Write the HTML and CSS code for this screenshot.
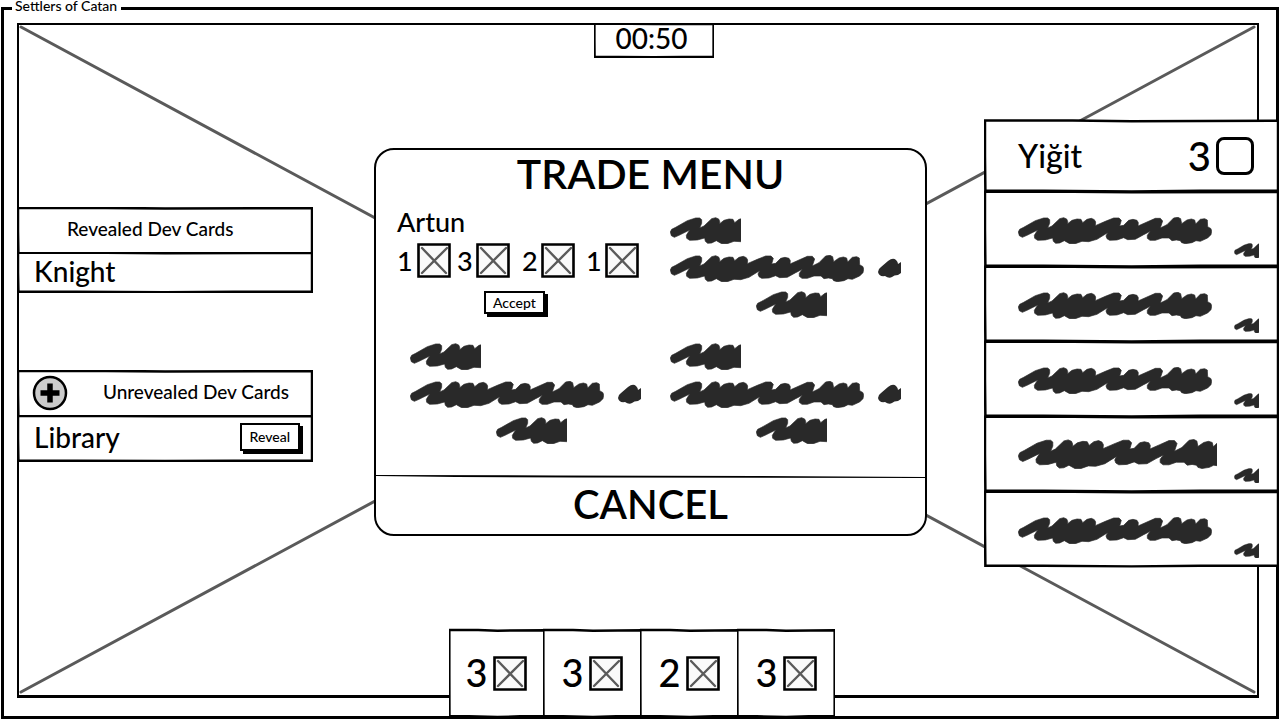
FILE: index.html
```html
<!DOCTYPE html>
<html lang="en">
<head>
<meta charset="utf-8">
<title>Settlers of Catan</title>
<link rel="stylesheet" href="styles.css">
</head>
<body>
<svg class="defs" aria-hidden="true">
  <symbol id="frame" viewBox="0 0 300 48" preserveAspectRatio="none">
    <path class="ink" d="M1 1 L90 1 L150 1.400 L299 1.200 L299 24 L299 46.600 L220 46.600 L150 47 L60 46.600 L1.400 46.600 L1 24Z"/>
  </symbol>
  <symbol id="crate" viewBox="0 0 34 35">
    <path d="M1.5 1.5 L32.5 1.5 L32.5 33.5 L1.5 33.5Z" fill="#fafafa" stroke="#000" stroke-width="2.6"/>
    <path d="M5 5 L29 30 M30 5 L5 30" fill="none" stroke="#5a5a5a" stroke-width="2.4" stroke-linecap="round"/>
  </symbol>
  <g id="squiggle" transform="scale(.3333) translate(-23 -35)">
    <path class="mass" d="M24 80 L28 72 L40 66 L75 46 L100 38 L112 38 L118 43 L118 54 L112 68 L125 62 L148 40 L160 37 L169 41 L172 48 L172 55 L185 45 L200 41 L212 42 L217 52 L230 42 L243 39 L252 43 L256 50 L255 61 L285 48 L310 38 L326 38 L333 45 L328 62 L340 60 L355 45 L368 42 L380 45 L384 52 L383 62 L410 50 L435 39 L450 39 L457 47 L450 68 L470 58 L490 38 L503 36 L511 40 L514 55 L530 44 L543 41 L553 44 L556 56 L570 42 L583 40 L591 44 L592 64 L602 70 L604 78 L602 88 L592 98 L570 108 L557 106 L545 112 L525 115 L514 112 L510 106 L498 104 L485 106 L476 98 L455 98 L435 105 L419 105 L411 99 L411 90 L420 78 L400 88 L375 102 L352 103 L340 97 L320 104 L298 105 L290 100 L287 92 L292 82 L260 102 L235 109 L215 108 L195 115 L178 115 L162 106 L148 113 L136 114 L129 108 L127 98 L105 104 L82 105 L73 99 L72 90 L82 74 L50 90 L36 96 L27 91Z"/>
  </g>
  <symbol id="long" viewBox="0 0 194 27"><use href="#squiggle"/></symbol>
  <symbol id="wide" viewBox="0 0 181 27"><use href="#squiggle"/></symbol>
  <symbol id="short" viewBox="0 0 71 27"><use href="#squiggle"/></symbol>
  <symbol id="tiny" viewBox="0 0 43 26"><use href="#squiggle"/></symbol>
  <symbol id="blob" viewBox="0 0 23 21">
    <path class="blot" d="M0 14 Q0 11 3 9 L10 3 Q15 -1 18 2 Q20 4 20 6 L23 4 V15 L20 17 Q16 17 14 19 Q11 21 7 18 Q1 19 0 14Z"/>
  </symbol>
</svg>

<fieldset class="window">
  <legend>Settlers of Catan</legend>
  <main class="stage">
    <svg class="board" viewBox="0 0 1236 669" preserveAspectRatio="none" aria-hidden="true">
      <path class="diagonal" d="M2 2 L1233 666 M1233 2 L2 666"/>
    </svg>

    <aside class="cards">
      <section>
        <div class="panel head"><svg class="frame"><use href="#frame"/></svg><h2>Revealed Dev Cards</h2></div>
        <div class="panel card low"><svg class="frame"><use href="#frame"/></svg><span>Knight</span></div>
      </section>
      <section>
        <div class="panel head spread"><svg class="frame"><use href="#frame"/></svg>
          <button class="add" type="button" aria-label="Add card">
            <svg viewBox="0 0 36 36"><circle cx="18" cy="18" r="16" fill="#ccc" stroke="#000" stroke-width="2.5"/><path d="M18 8.500V27.500M8.500 18H27.500" stroke="#000" stroke-width="5.500"/></svg>
          </button>
          <h2>Unrevealed Dev Cards</h2></div>
        <div class="panel card"><svg class="frame"><use href="#frame"/></svg><span>Library</span><button class="btn" type="button">Reveal</button></div>
      </section>
    </aside>

    <div class="center">
      <div class="panel timer"><svg class="frame"><use href="#frame"/></svg><time>00:50</time></div>

      <section class="trade">
        <h1>TRADE MENU</h1>
        <div class="offers">
          <article class="offer">
            <h3>Artun</h3>
            <ul class="goods">
              <li><b>1</b><svg class="crate"><use href="#crate"/></svg></li>
              <li><b>3</b><svg class="crate"><use href="#crate"/></svg></li>
              <li><b>2</b><svg class="crate"><use href="#crate"/></svg></li>
              <li><b>1</b><svg class="crate"><use href="#crate"/></svg></li>
            </ul>
            <button class="btn accept" type="button">Accept</button>
          </article>
          <article class="offer ghost">
            <svg class="short"><use href="#short"/></svg>
            <div class="line"><svg class="long"><use href="#long"/></svg><svg class="blob"><use href="#blob"/></svg></div>
            <svg class="short inset"><use href="#short"/></svg>
          </article>
          <article class="offer ghost">
            <svg class="short"><use href="#short"/></svg>
            <div class="line"><svg class="long"><use href="#long"/></svg><svg class="blob"><use href="#blob"/></svg></div>
            <svg class="short inset"><use href="#short"/></svg>
          </article>
          <article class="offer ghost">
            <svg class="short"><use href="#short"/></svg>
            <div class="line"><svg class="long"><use href="#long"/></svg><svg class="blob"><use href="#blob"/></svg></div>
            <svg class="short inset"><use href="#short"/></svg>
          </article>
        </div>
        <svg class="rule" viewBox="0 0 550 4" preserveAspectRatio="none"><path d="M0 0 L180 .5 L380 1 L550 2 L550 3 L200 2.500 L80 2 L0 1Z"/></svg>
        <button class="cancel" type="button">CANCEL</button>
      </section>

      <ul class="hand">
        <li class="panel"><svg class="frame"><use href="#frame"/></svg><b>3</b><svg class="crate"><use href="#crate"/></svg></li>
        <li class="panel"><svg class="frame"><use href="#frame"/></svg><b>3</b><svg class="crate"><use href="#crate"/></svg></li>
        <li class="panel"><svg class="frame"><use href="#frame"/></svg><b>2</b><svg class="crate"><use href="#crate"/></svg></li>
        <li class="panel"><svg class="frame"><use href="#frame"/></svg><b>3</b><svg class="crate"><use href="#crate"/></svg></li>
      </ul>
    </div>

    <ul class="players">
      <li class="panel active"><svg class="frame"><use href="#frame"/></svg><span>Yiğit</span><b>3</b><i class="tile"></i></li>
      <li class="panel"><svg class="frame"><use href="#frame"/></svg><svg class="long"><use href="#long"/></svg><svg class="tiny"><use href="#tiny"/></svg></li>
      <li class="panel"><svg class="frame"><use href="#frame"/></svg><svg class="long"><use href="#long"/></svg><svg class="tiny"><use href="#tiny"/></svg></li>
      <li class="panel"><svg class="frame"><use href="#frame"/></svg><svg class="long"><use href="#long"/></svg><svg class="tiny"><use href="#tiny"/></svg></li>
      <li class="panel"><svg class="frame"><use href="#frame"/></svg><svg class="wide"><use href="#wide"/></svg><svg class="tiny"><use href="#tiny"/></svg></li>
      <li class="panel"><svg class="frame"><use href="#frame"/></svg><svg class="long"><use href="#long"/></svg><svg class="tiny"><use href="#tiny"/></svg></li>
    </ul>
  </main>
</fieldset>
</body>
</html>
```
FILE: styles.css
```css
* { box-sizing: border-box; }
body {
  margin: 0;
  min-height: 100vh;
  display: flex;
  background: #fff;
  color: #000;
  font-family: Lato, "Open Sans", sans-serif;
  font-weight: 500;
}
h1, h2, h3, ul { margin: 0; padding: 0; font-weight: inherit; }
ul { list-style: none; }
b { font-weight: inherit; }
svg { display: block; flex: none; }
button { font: inherit; color: inherit; padding: 0; border: 0; background: none; }
.defs { position: absolute; width: 0; height: 0; }

.ink { fill: #fff; stroke: #000; stroke-width: 2.5px; vector-effect: non-scaling-stroke; }
.mass { fill: #292929; stroke: #292929; stroke-width: 2px; stroke-linejoin: round; }
.blot { fill: #292929; }

.window {
  flex: 1;
  min-width: 0;
  margin: 0 1px 1px;
  padding: 0;
  border: 3px solid #000;
}
legend {
  margin-left: 8px;
  padding: 0 4px 4px 3px;
  font-size: 14px;
  line-height: 12px;
}
.stage {
  position: relative;
  min-height: calc(100vh - 20px);
  padding-left: 13px;
  display: grid;
  grid-template-columns: 357fr 553fr 349fr;
}
.board {
  position: absolute;
  top: 7px;
  left: 13px;
  width: calc(100% - 30px);
  height: calc(100% - 25px);
  border: 3px solid #000;
  border-width: 2px 2px 3px;
}
.diagonal { fill: none; stroke: #5a5a5a; stroke-width: 3px; stroke-linecap: round; vector-effect: non-scaling-stroke; }

.panel { position: relative; display: flex; align-items: center; }
.panel > * { position: relative; }
.panel > .frame { position: absolute; inset: 0; width: 100%; height: 100%; overflow: visible; }

.cards { padding: 191px 61px 0 0; display: flex; flex-direction: column; gap: 77px; }
.head { height: 48px; padding: 0 24px 4px 50px; }
.head h2 { font-size: 19px; line-height: 24px; }
.spread { padding: 0 24px 4px 15px; justify-content: space-between; }
.add { width: 36px; height: 36px; margin-top: 2px; }
.card { height: 47px; margin-top: -3px; padding: 0 13px 4px 17px; justify-content: space-between; font-size: 28px; line-height: 32px; }
.low { height: 41px; }
.btn {
  height: 28px;
  padding: 0 8px;
  border: 2px solid #000;
  background: #fff;
  box-shadow: 3px 3px 0 #000;
  font-size: 14px;
  line-height: 20px;
}

.center { position: relative; display: flex; flex-direction: column; align-items: center; padding-top: 7px; }
.timer { width: 120px; height: 35px; margin-left: 6px; justify-content: center; padding: 0 4px 6px 0; font-size: 28px; line-height: 30px; }

.trade {
  width: 100%;
  margin-top: 90px;
  border: 2px solid #000;
  border-radius: 20px;
  background: #fff;
}
.trade h1 { text-align: center; font-size: 41px; font-weight: 600; line-height: 48px; }
.offers {
  padding: 10px 0 0 21px;
  display: grid;
  grid-template-columns: 260px 260px;
  grid-auto-rows: 126px;
}
.offer h3 { font-size: 27px; line-height: 28px; }
.goods { display: grid; grid-template-columns: 60px 65px 64px 53px; margin-top: 7px; font-size: 27px; line-height: 35px; }
.goods li { display: flex; align-items: center; justify-content: space-between; }
.goods li:first-child { padding-right: 6px; }
.goods li:nth-child(2) { padding-right: 12px; }
.goods li:nth-child(3) { padding-right: 11px; }
.goods .crate { width: 34px; height: 35px; }
.accept { display: block; height: 23px; padding: 0 7px; margin: 13px 0 0 87px; line-height: 19px; }
.ghost { padding: 9px 0 0 13px; }
.line { display: flex; align-items: center; gap: 14px; margin: 11px 0 9px; }
.long { width: 194px; height: 27px; }
.short { width: 71px; height: 27px; }
.inset { margin-left: 86px; }
.wide { width: 199px; height: 30px; }
.tiny { width: 25px; height: 15px; }
.blob { width: 23px; height: 21px; }
.rule { width: 100%; height: 4px; margin-top: 15px; }
.cancel { display: block; width: 100%; height: 55px; padding-bottom: 5px; font-size: 40px; font-weight: 600; line-height: 48px; }

.hand { display: flex; margin: auto 18px -3px 0; padding-left: 3px; }
.hand li { width: 100px; height: 91px; margin-left: -3px; padding: 0 0 0 19px; gap: 5px; font-size: 38px; line-height: 36px; }
.hand li:first-child { width: 97px; padding-left: 17px; }
.hand li:last-child { width: 98px; }
.hand b { padding-bottom: 4px; }
.hand .crate { width: 34px; height: 35px; }

.players { padding-top: 103px; margin: 0 -3px 0 57px; }
.players li { height: 78px; margin-top: -3px; padding: 0 20px 10px 34px; justify-content: space-between; align-items: flex-end; }
.players li > svg:nth-child(2) { margin-bottom: 14px; }
.players .active { height: 74px; margin-top: 0; padding: 0 25px 0 34px; align-items: center; font-size: 32px; line-height: 40px; }
.active span { flex: 1; }
.active b { font-size: 40px; margin-right: 5px; }
.tile { width: 38px; height: 38px; border: 3px solid #000; border-radius: 8px; }
```
